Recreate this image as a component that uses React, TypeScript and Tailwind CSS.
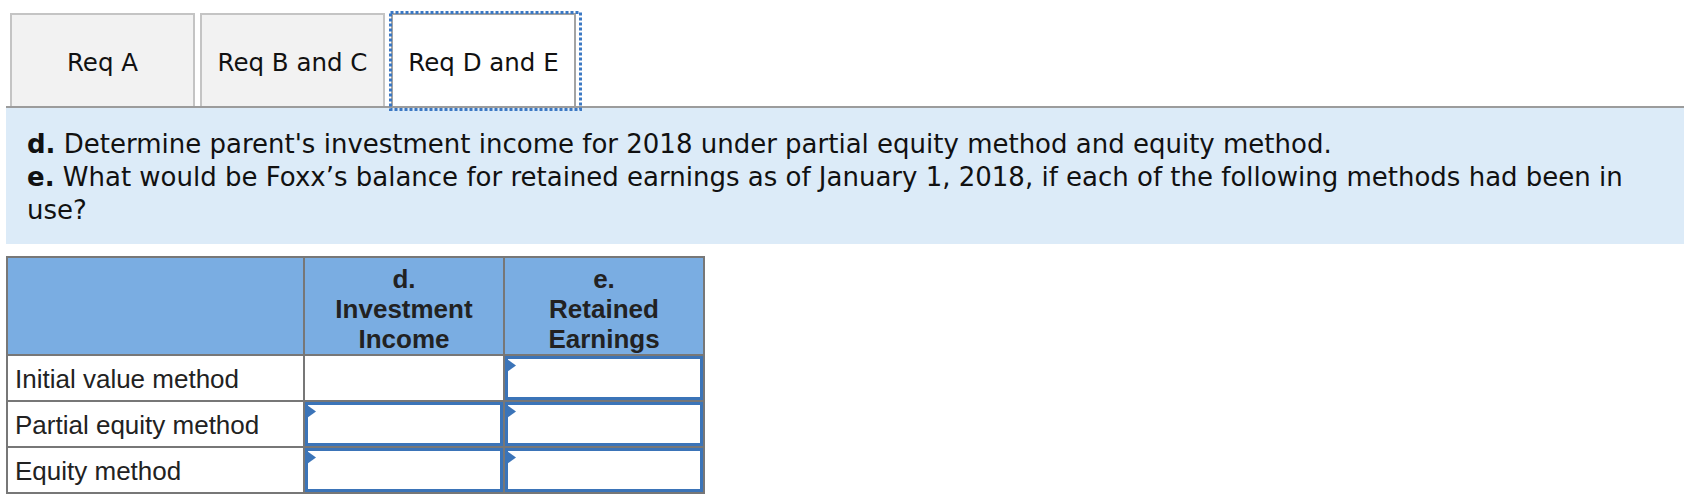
const tabs = ["Req A", "Req B and C", "Req D and E"];

const rows = [
  { label: "Initial value method", inputs: [false, true] },
  { label: "Partial equity method", inputs: [true, true] },
  { label: "Equity method", inputs: [true, true] },
];

function Flag() {
  return (
    <svg className="absolute left-[-1px] top-0" width="10" height="13" viewBox="0 0 10 13">
      <polygon points="0,0 9,6.5 0,13" fill="#3b74b8" />
    </svg>
  );
}

function FocusRing() {
  return (
    <svg className="absolute left-[-4px] top-[-4px] pointer-events-none" width="193" height="100">
      <rect x="1.5" y="1.5" width="190" height="97" fill="none" stroke="#3b78c4" strokeWidth="3" strokeDasharray="3 2" />
    </svg>
  );
}

export default function App() {
  return (
    <div className="w-[1684px] h-[504px] bg-white pl-[6px] pt-[13px] text-[#111]">
      <div className="flex items-end gap-[5px] border-b-2 border-[#9c9c9c] pl-[4px] font-['DejaVu_Sans',sans-serif] text-[24.5px]">
        {tabs.map((t, i) =>
          i === 2 ? (
            <div
              key={t}
              className="relative ml-[1px] flex h-[93px] w-[185px] items-center justify-center border-2 border-b-0 border-[#a3a3a3] bg-white pt-[5px]"
            >
              {t}
              <FocusRing />
            </div>
          ) : (
            <div
              key={t}
              className="flex h-[93px] w-[185px] items-center justify-center border-2 border-b-0 border-[#c4c4c4] bg-[#f2f2f2] pt-[5px]"
            >
              {t}
            </div>
          )
        )}
      </div>

      <div className="bg-[#dcebf8] pl-[21px] pr-[18px] pt-[20px] pb-[17px] font-['DejaVu_Sans',sans-serif] text-[26px] leading-[33px]">
        <p>
          <b>d.</b> Determine parent's investment income for 2018 under partial equity method and equity method.
        </p>
        <p>
          <b>e.</b> What would be Foxx’s balance for retained earnings as of January 1, 2018, if each of the following methods had been in use?
        </p>
      </div>

      <table className="mt-[12px] w-[697px] table-fixed border-collapse border-2 border-[#777] font-['Liberation_Sans',Arial,sans-serif] text-[26px] text-[#222]">
        <colgroup>
          <col className="w-[297px]" />
          <col className="w-[200px]" />
          <col className="w-[200px]" />
        </colgroup>
        <thead>
          <tr className="bg-[#7aade2]">
            <th className="border-2 border-[#777]" />
            <th className="h-[98px] border-2 border-[#777] pt-[6px] align-top font-bold leading-[30px]">
              d.
              <br />
              Investment
              <br />
              Income
            </th>
            <th className="h-[98px] border-2 border-[#777] pt-[6px] align-top font-bold leading-[30px]">
              e.
              <br />
              Retained
              <br />
              Earnings
            </th>
          </tr>
        </thead>
        <tbody>
          {rows.map((r) => (
            <tr key={r.label}>
              <td className="h-[46px] border-2 border-[#777] pl-[7px] pt-[2px] leading-[28px]">{r.label}</td>
              {r.inputs.map((on, j) => (
                <td key={j} className="h-[46px] border-2 border-[#777] p-0">
                  {on ? (
                    <div className="relative h-[44px] w-full border-[3px] border-[#3b74b8] bg-white">
                      <Flag />
                    </div>
                  ) : null}
                </td>
              ))}
            </tr>
          ))}
        </tbody>
      </table>
    </div>
  );
}
